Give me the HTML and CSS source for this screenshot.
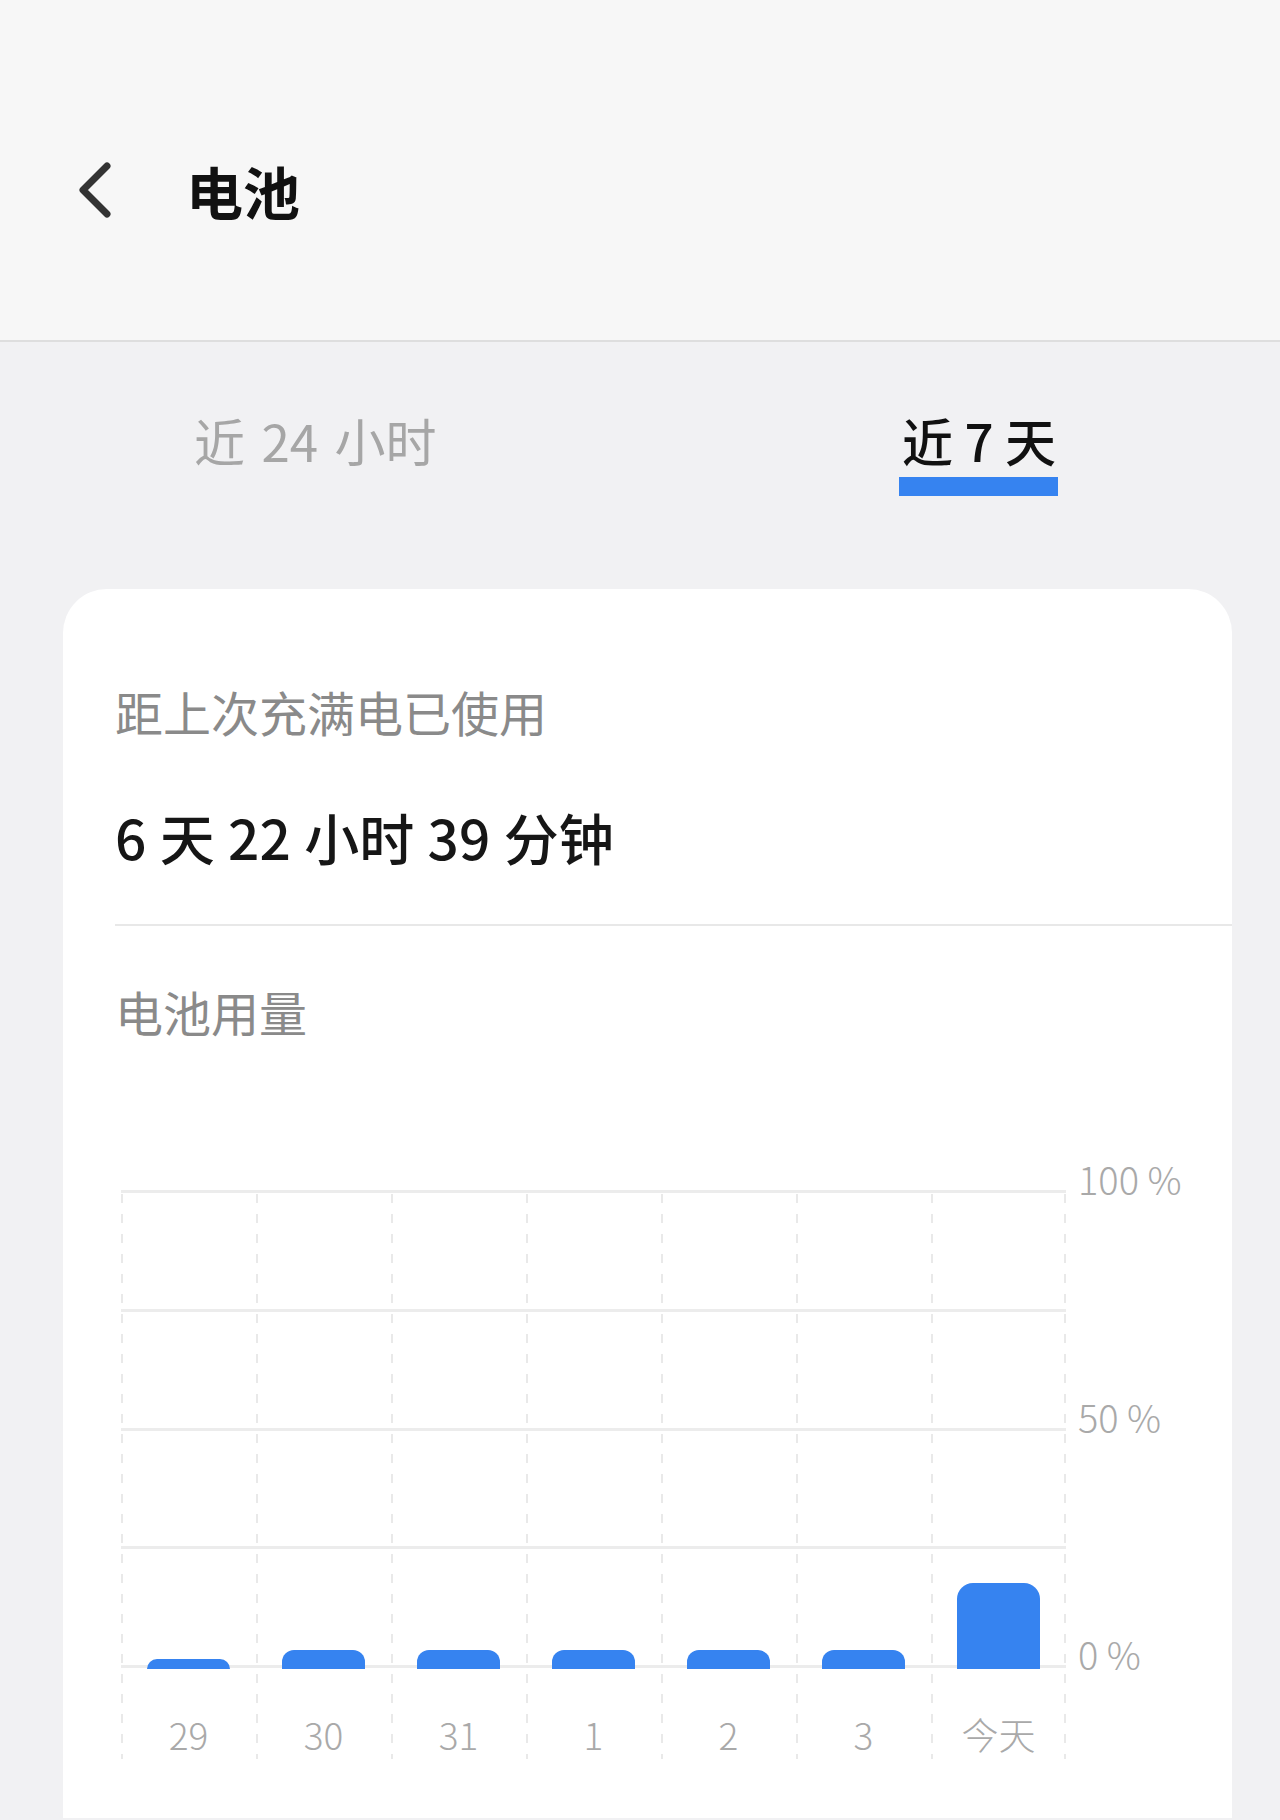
FILE: index.html
```
<!DOCTYPE html>
<html lang="zh-CN">
<head>
	<meta charset="UTF-8">
	<title>电池</title>
	<link rel="stylesheet" href="styles.css">
</head>
<body>
	<div class="header">
		<span class="back">
			<svg width="36" height="56" viewBox="0 0 36 56"><polyline points="30,4 6,28 30,52" fill="none" stroke="#333" stroke-width="7" stroke-linecap="round" stroke-linejoin="round"/></svg>
		</span>
		<h1 class="title">电池</h1>
	</div>

	<div class="tabs">
		<div class="tab">近 24 小时</div>
		<div class="tab active">近 7 天</div>
	</div>

	<div class="card">
		<div class="label">距上次充满电已使用</div>
		<div class="value">6 天 22 小时 39 分钟</div>
		<div class="divider"></div>
		<div class="label usage">电池用量</div>

		<div class="chart">
			<div class="cols">
				<div class="col"><div class="bars"><span class="bar" style="height:10px"></span></div><div class="xlabel">29</div></div>
				<div class="col"><div class="bars"><span class="bar" style="height:19px"></span></div><div class="xlabel">30</div></div>
				<div class="col"><div class="bars"><span class="bar" style="height:19px"></span></div><div class="xlabel">31</div></div>
				<div class="col"><div class="bars"><span class="bar" style="height:19px"></span></div><div class="xlabel">1</div></div>
				<div class="col"><div class="bars"><span class="bar" style="height:19px"></span></div><div class="xlabel">2</div></div>
				<div class="col"><div class="bars"><span class="bar" style="height:19px"></span></div><div class="xlabel">3</div></div>
				<div class="col last"><div class="bars"><span class="bar big" style="height:86px"></span></div><div class="xlabel">今天</div></div>
			</div>
			<div class="axis">
				<span>100 %</span>
				<span>50 %</span>
				<span>0 %</span>
			</div>
		</div>
	</div>
</body>
</html>
```

FILE: styles.css
```
body{
	margin: 0;
	background: #f1f1f3;
	font-family: "Noto Sans CJK SC", "Noto Sans", sans-serif;
	color: #111;
}
.header{
	display: flex;
	align-items: center;
	height: 100px;
	padding: 140px 0 100px 77px;
	background: #f7f7f7;
	border-bottom: 2px solid #dedede;
}
.back{
	display: flex;
	width: 36px;
	height: 56px;
	margin-right: 73px;
}
.title{
	margin: 0;
	font-size: 57px;
	font-weight: 700;
	line-height: 70px;
	color: #111;
}

/* tabs */
.tabs{
	display: flex;
	justify-content: space-between;
	padding: 68px 224px 0 194px;
	height: 179px;
}
.tab{
	height: 60px;
	font-size: 51px;
	line-height: 60px;
	color: #a6a6a6;
	word-spacing: 5px;
}
.tab.active{
	color: #111;
	font-weight: 500;
	word-spacing: 0;
}
.tab.active::after{
	content: "";
	display: block;
	height: 19px;
	margin: 7px -2px 0 -3px;
	background: #3683f0;
}

/* card */
.card{
	margin: 0 48px 0 63px;
	padding: 92px 0 0 52px;
	height: 1137px;
	background: #fff;
	border-radius: 44px 44px 0 0;
}
.label{
	font-size: 48px;
	line-height: 60px;
	color: #8a8a8a;
}
.value{
	margin-top: 60px;
	font-size: 55px;
	line-height: 70px;
	font-weight: 500;
	color: #161616;
	word-spacing: 1px;
}
.divider{
	height: 2px;
	margin-top: 53px;
	background: #e8e8e8;
}
.usage{
	margin-top: 55px;
}

/* chart */
.chart{
	display: flex;
	align-items: flex-start;
	margin: 149px 0 0 6px;
}
.cols{
	display: grid;
	grid-template-columns: repeat(7, 135px);
	height: 552px;
	background: repeating-linear-gradient(to bottom, #ececec 0 3px, transparent 3px 118.75px) left top / 100% 478px no-repeat;
}
.col{
	display: flex;
	flex-direction: column;
	background: repeating-linear-gradient(to bottom, #e9e9e9 0 9px, transparent 9px 20px) left 4px / 2px 100% no-repeat;
}
.col.last{
	background:
		repeating-linear-gradient(to bottom, #e9e9e9 0 9px, transparent 9px 20px) left 4px / 2px 100% no-repeat,
		repeating-linear-gradient(to bottom, #e9e9e9 0 9px, transparent 9px 20px) right 4px / 2px 100% no-repeat;
}
.bars{
	display: flex;
	align-items: flex-end;
	justify-content: center;
	height: 479px;
}
.bar{
	display: block;
	width: 83px;
	background: #3683f0;
	border-radius: 12px 12px 0 0;
}
.bar.big{
	border-radius: 16px 16px 0 0;
}
.xlabel{
	padding-top: 40px;
	font-size: 37px;
	line-height: 50px;
	font-weight: 300;
	color: #a9a9a9;
	text-align: center;
}
.axis{
	display: flex;
	flex-direction: column;
	justify-content: space-between;
	height: 517px;
	margin: -32px 0 0 12px;
	font-size: 38px;
	line-height: 42px;
	font-weight: 300;
	color: #a9a9a9;
}
```
